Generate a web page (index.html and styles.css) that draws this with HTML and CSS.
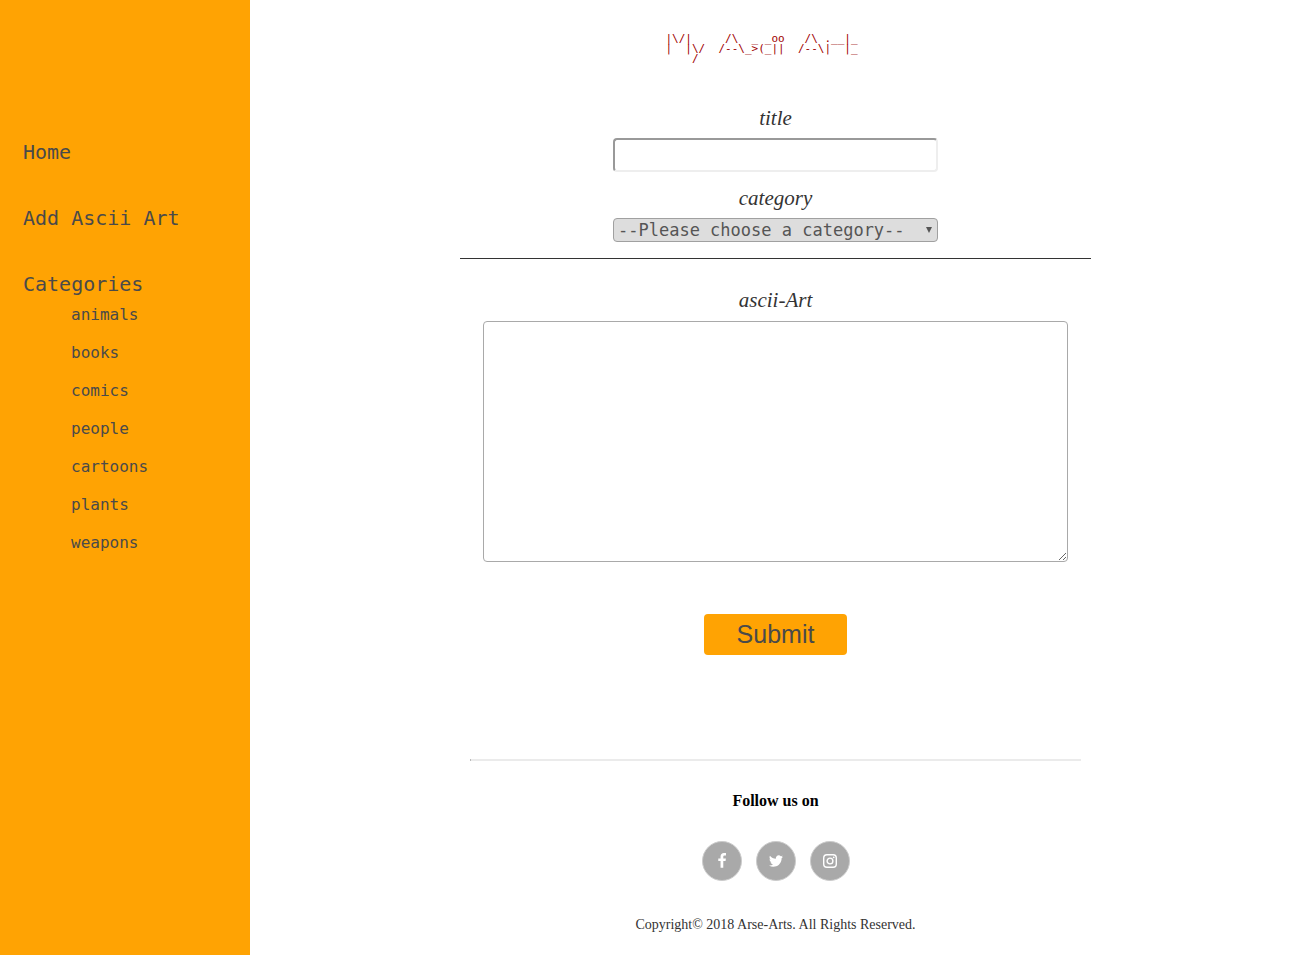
FILE: index.html
```html
<!DOCTYPE html>
<html lang="en">
<head>
<meta charset="utf-8">
<title>My Ascii Art</title>
<link rel="stylesheet" href="styles.css">
</head>
<body>
<nav class="sidebar">
  <ul class="menu">
    <li><a href="#">Home</a></li>
    <li><a href="#">Add Ascii Art</a></li>
    <li><a href="#">Categories</a>
      <ul class="submenu">
        <li><a href="#">animals</a></li>
        <li><a href="#">books</a></li>
        <li><a href="#">comics</a></li>
        <li><a href="#">people</a></li>
        <li><a href="#">cartoons</a></li>
        <li><a href="#">plants</a></li>
        <li><a href="#">weapons</a></li>
      </ul>
    </li>
  </ul>
</nav>
<main class="content">
<pre class="logo">|\/|     /\  _ _oo   /\ .__|_
|  |\/  /--\_&gt;(_||  /--\|  |_
    /</pre>
  <form class="art-form">
    <div class="details">
      <label for="title">title</label>
      <input class="title-input" id="title" type="text">
      <label for="category">category</label>
      <div class="select-box">
        <select id="category"><option>--Please choose a category--</option></select>
      </div>
    </div>
    <div class="art">
      <label for="art">ascii-Art</label>
      <textarea id="art"></textarea>
    </div>
    <button class="submit" type="submit">Submit</button>
  </form>
  <footer class="footer">
    <hr>
    <h4>Follow us on</h4>
    <div class="social">
      <a href="#" aria-label="Facebook"><svg viewBox="0 0 1792 1792"><path d="M1343 12v264h-157q-86 0-116 36t-30 108v189h293l-39 296h-254v759h-306v-759h-255v-296h255v-218q0-186 104-288.5t277-102.5q147 0 228 12z"/></svg></a>
      <a href="#" aria-label="Twitter"><svg viewBox="0 0 1792 1792"><path d="M1684 408q-67 98-162 167 1 14 1 42 0 130-38 259.5t-115.5 248.5-184.5 210.5-258 146-323 54.5q-271 0-496-145 35 4 78 4 225 0 401-138-105-2-188-64.5t-114-159.5q33 5 61 5 43 0 85-11-112-23-185.5-111.5t-73.5-205.5v-4q68 38 146 41-66-44-105-115t-39-154q0-88 44-163 121 149 294.5 238.5t371.5 99.5q-8-38-8-74 0-134 94.5-228.5t228.5-94.5q140 0 236 102 109-21 205-78-37 115-142 178 93-10 186-50z"/></svg></a>
      <a href="#" aria-label="Instagram"><svg viewBox="0 0 16 16"><g fill="none" stroke="#fff" stroke-width="1.4"><rect x="1.7" y="1.7" width="12.6" height="12.6" rx="3.2"/><circle cx="8" cy="8" r="2.9"/></g><circle cx="11.7" cy="4.3" r=".9"/></svg></a>
    </div>
    <p>Copyright© 2018 Arse-Arts. All Rights Reserved.</p>
  </footer>
</main>
</body>
</html>
```
FILE: styles.css
```css
* { box-sizing: border-box; }
body {
  margin: 0;
  display: flex;
  min-height: 100vh;
  background: #fff;
  font-family: "Liberation Serif", "Times New Roman", serif;
}
.sidebar {
  flex: 0 0 250px;
  padding: 140px 23px 24px;
  background: #ffa303;
  font-family: "DejaVu Sans Mono", monospace;
}
.sidebar a { color: #4a4a4a; text-decoration: none; }
.menu, .submenu { margin: 0; padding: 0; list-style: none; }
.menu { display: grid; gap: 42px; font-size: 20px; line-height: 24px; }
.submenu {
  display: grid;
  gap: 14px;
  padding: 7px 0 0 48px;
  font-size: 16px;
}
.content { flex: 1; display: flex; flex-direction: column; align-items: center; }
.logo {
  margin: 34px 0 40px;
  padding-right: 28px;
  color: #a00000;
  font: 11px/10px "DejaVu Sans Mono", monospace;
}
.art-form { width: 60%; display: flex; flex-direction: column; align-items: center; }
.art-form label {
  color: #333;
  font-size: 21px;
  font-style: italic;
  line-height: 24px;
}
.details {
  width: 100%;
  display: flex;
  flex-direction: column;
  align-items: center;
  padding: 2px 0 16px;
  border-bottom: 1px solid #333;
}
.title-input {
  width: 325px;
  max-width: 100%;
  height: 34px;
  margin: 8px 0 14px;
  padding: 4px;
  border: 2px solid;
  border-color: #999 #eee #eee #999;
  border-radius: 4px;
  font-size: 17px;
}
.select-box { position: relative; width: 325px; max-width: 100%; margin-top: 8px; }
.select-box::after {
  content: "";
  position: absolute;
  right: 6px;
  top: 9px;
  border: solid transparent;
  border-width: 6px 3px 0;
  border-top-color: #555;
  pointer-events: none;
}
.select-box select {
  display: block;
  width: 100%;
  height: 24px;
  padding: 0 4px;
  appearance: none;
  border: 1px solid #a0a0a0;
  border-radius: 4px;
  background: #ddd;
  color: #555;
  font: 17px "DejaVu Sans Mono", monospace;
}
.art {
  width: 100%;
  display: flex;
  flex-direction: column;
  align-items: center;
  padding: 29px 23px 0;
}
.art textarea {
  width: 100%;
  height: 241px;
  margin: 9px 0 0;
  border: 1px solid #a9a9a9;
  border-radius: 4px;
}
.submit {
  width: 143px;
  height: 41px;
  margin-top: 52px;
  border: 0;
  border-radius: 4px;
  background: #ffa303;
  color: #4a4a4a;
  font: 25px "Liberation Sans", Arial, sans-serif;
}
.footer { width: 60%; padding: 0 10px; margin-top: 104px; text-align: center; }
.footer hr { height: 2px; margin: 0; border: 0; border-left: 1px solid #bbb; background: #ebebeb; }
.footer h4 { margin: 31px 0; font-size: 16px; line-height: 18px; }
.social { display: flex; justify-content: center; gap: 14px; }
.social a {
  display: grid;
  place-items: center;
  width: 40px;
  height: 40px;
  border: 1px solid #ccc;
  border-radius: 50%;
  background: #a9a9a9;
}
.social svg { width: 16px; height: 16px; fill: #fff; }
.footer p { margin: 36px 0 16px; color: #333; font-size: 14px; line-height: 16px; }
```
